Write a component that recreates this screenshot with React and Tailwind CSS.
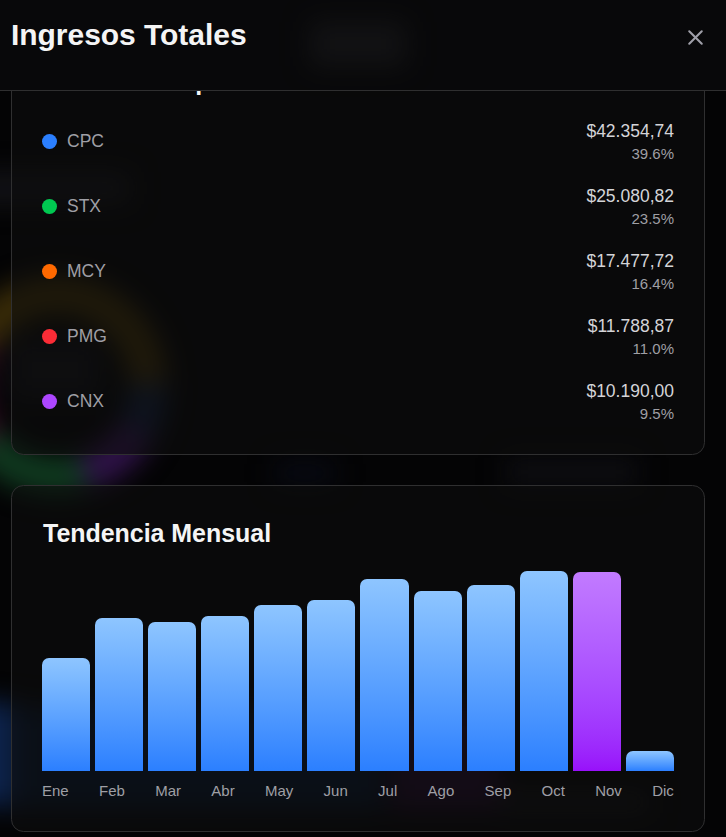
import { X } from 'lucide-react';

const companies = [
  { name: 'CPC', amount: '$42.354,74', share: '39.6%', dot: 'bg-blue-500' },
  { name: 'STX', amount: '$25.080,82', share: '23.5%', dot: 'bg-green-500' },
  { name: 'MCY', amount: '$17.477,72', share: '16.4%', dot: 'bg-orange-500' },
  { name: 'PMG', amount: '$11.788,87', share: '11.0%', dot: 'bg-red-500' },
  { name: 'CNX', amount: '$10.190,00', share: '9.5%', dot: 'bg-purple-500' },
];

const months = [
  { label: 'Ene', height: 113 },
  { label: 'Feb', height: 153 },
  { label: 'Mar', height: 149 },
  { label: 'Abr', height: 155 },
  { label: 'May', height: 166 },
  { label: 'Jun', height: 171 },
  { label: 'Jul', height: 192 },
  { label: 'Ago', height: 180 },
  { label: 'Sep', height: 186 },
  { label: 'Oct', height: 200 },
  { label: 'Nov', height: 199, current: true },
  { label: 'Dic', height: 20 },
];

// Dashboard glow showing through the dark overlay
function Backdrop() {
  return (
    <div className="absolute inset-0 overflow-hidden" aria-hidden="true">
      <svg className="absolute inset-0 h-full w-full overflow-visible blur-[13px]" viewBox="0 0 726 837" fill="none">
        <g strokeWidth="38">
          <path d="M-20 340A90 90 0 0 1 148 384" stroke="#3a2c08" />
          <path d="M148 384A90 90 0 0 1 137 430" stroke="#101d38" />
          <path d="M137 430A90 90 0 0 1 84 472" stroke="#30134a" />
          <path d="M84 472A90 90 0 0 1 -14 441" stroke="#103a20" />
          <path d="M-14 441A90 90 0 0 1 -20 340" stroke="#3c0d28" />
        </g>
        <rect x="10" y="340" width="90" height="60" fill="#0f0f13" />
        <rect x="310" y="22" width="96" height="44" fill="#1c1c1e" />
        <rect x="-30" y="172" width="160" height="32" fill="#121216" />
        <rect x="506" y="458" width="132" height="28" fill="#0e0e12" />
        <rect x="275" y="462" width="60" height="22" fill="#080a14" />
        <rect x="-60" y="702" width="76" height="104" fill="#0d234c" />
        <rect x="14" y="706" width="370" height="104" fill="#071326" />
        <rect x="390" y="706" width="110" height="104" fill="#1d0a24" />
        <rect x="500" y="790" width="150" height="24" fill="#101012" />
      </svg>
    </div>
  );
}

function Card({ title, className = '', children }) {
  return (
    <section className={`rounded-[12.5px] border border-[#2f2f30] bg-[#0d0d0d]/60 p-[30px] ${className}`}>
      <h3 className="mb-5 pl-px text-[25px] leading-[35px] font-bold tracking-[-0.04px] text-neutral-100">{title}</h3>
      {children}
    </section>
  );
}

export default function App() {
  return (
    <div className="relative h-screen overflow-hidden bg-[#040405] font-['Liberation_Sans',Arial,sans-serif]">
      <Backdrop />
      <div className="relative flex h-full flex-col">
        <header className="flex h-[91px] shrink-0 items-start justify-between border-b border-[#2f2f30] bg-[#0b0b0e]/60 pt-[17px] pr-[18px] pl-[11px]">
          <h2 className="text-[30px] leading-[36px] font-bold tracking-[-0.04px] text-zinc-100">Ingresos Totales</h2>
          <button className="mt-[8px] text-zinc-400" aria-label="Cerrar">
            <X size={25} strokeWidth={2} />
          </button>
        </header>

        <main className="min-h-0 flex-1 overflow-hidden pr-[21px] pl-[11px]">
          {/* Scrolled down, so the first title sits under the header */}
          <Card title="Distribución por Unidad" className="-mt-[58px]">
            <ul className="flex flex-col gap-5">
              {companies.map(item => (
                <li key={item.name} className="flex items-center justify-between">
                  <div className="flex items-center gap-2.5">
                    <span className={`size-[15px] rounded-full ${item.dot}`} />
                    <span className="text-[17.5px] leading-[25px] text-[#9f9fa5]">{item.name}</span>
                  </div>
                  <div className="text-right">
                    <div className="text-[17.5px] leading-[25px] text-zinc-300">{item.amount}</div>
                    <div className="text-[15px] leading-5 text-[#9f9fa5]">{item.share}</div>
                  </div>
                </li>
              ))}
            </ul>
          </Card>

          <Card title="Tendencia Mensual" className="mt-[30px]">
            <div className="flex h-[200px] items-end gap-[5px]">
              {months.map(m => (
                <div
                  key={m.label}
                  className={`flex-1 rounded-t-[7px] bg-linear-to-t ${
                    m.current ? 'from-purple-600 to-purple-400' : 'from-blue-500 to-blue-300'
                  }`}
                  style={{ height: m.height }}
                />
              ))}
            </div>
            <div className="mt-2.5 flex justify-between text-[15px] leading-5 text-[#9f9fa5]">
              {months.map(m => (
                <span key={m.label}>{m.label}</span>
              ))}
            </div>
          </Card>
        </main>
      </div>
    </div>
  );
}
